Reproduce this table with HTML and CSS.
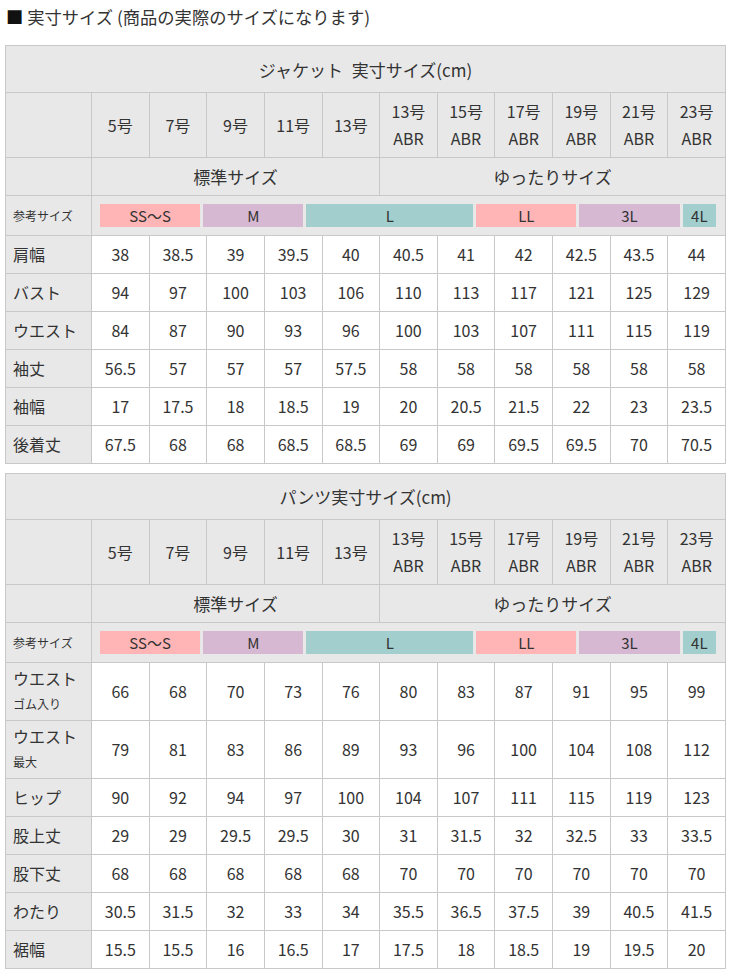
FILE: index.html
```html
<!DOCTYPE html>
<html lang="ja">
<head>
<meta charset="utf-8">
<title>実寸サイズ</title>
<link rel="stylesheet" href="styles.css">
</head>
<body>
<div class="page">
  <h1 class="title"><span class="sq">■</span> 実寸サイズ (商品の実際のサイズになります)</h1>

  <table class="size-table">
    <colgroup><col class="c-label"><col span="11"></colgroup>
    <tr class="r-title"><th colspan="12">ジャケット 実寸サイズ(cm)</th></tr>
    <tr class="r-num">
      <th class="lab"></th>
      <th>5号</th><th>7号</th><th>9号</th><th>11号</th><th>13号</th>
      <th>13号<br>ABR</th><th>15号<br>ABR</th><th>17号<br>ABR</th><th>19号<br>ABR</th><th>21号<br>ABR</th><th>23号<br>ABR</th>
    </tr>
    <tr class="r-group">
      <th class="lab"></th>
      <th colspan="5">標準サイズ</th>
      <th colspan="6">ゆったりサイズ</th>
    </tr>
    <tr class="r-ref">
      <th class="lab small">参考サイズ</th>
      <td colspan="11" class="ref-cell">
        <div class="bars">
          <span class="bar pink">SS～S</span>
          <span class="bar purple">M</span>
          <span class="bar teal">L</span>
          <span class="bar pink">LL</span>
          <span class="bar purple">3L</span>
          <span class="bar teal">4L</span>
        </div>
      </td>
    </tr>
    <tr><th class="lab">肩幅</th><td>38</td><td>38.5</td><td>39</td><td>39.5</td><td>40</td><td>40.5</td><td>41</td><td>42</td><td>42.5</td><td>43.5</td><td>44</td></tr>
    <tr><th class="lab">バスト</th><td>94</td><td>97</td><td>100</td><td>103</td><td>106</td><td>110</td><td>113</td><td>117</td><td>121</td><td>125</td><td>129</td></tr>
    <tr><th class="lab">ウエスト</th><td>84</td><td>87</td><td>90</td><td>93</td><td>96</td><td>100</td><td>103</td><td>107</td><td>111</td><td>115</td><td>119</td></tr>
    <tr><th class="lab">袖丈</th><td>56.5</td><td>57</td><td>57</td><td>57</td><td>57.5</td><td>58</td><td>58</td><td>58</td><td>58</td><td>58</td><td>58</td></tr>
    <tr><th class="lab">袖幅</th><td>17</td><td>17.5</td><td>18</td><td>18.5</td><td>19</td><td>20</td><td>20.5</td><td>21.5</td><td>22</td><td>23</td><td>23.5</td></tr>
    <tr><th class="lab">後着丈</th><td>67.5</td><td>68</td><td>68</td><td>68.5</td><td>68.5</td><td>69</td><td>69</td><td>69.5</td><td>69.5</td><td>70</td><td>70.5</td></tr>
  </table>

  <table class="size-table second">
    <colgroup><col class="c-label"><col span="11"></colgroup>
    <tr class="r-title r-title2"><th colspan="12">パンツ実寸サイズ(cm)</th></tr>
    <tr class="r-num">
      <th class="lab"></th>
      <th>5号</th><th>7号</th><th>9号</th><th>11号</th><th>13号</th>
      <th>13号<br>ABR</th><th>15号<br>ABR</th><th>17号<br>ABR</th><th>19号<br>ABR</th><th>21号<br>ABR</th><th>23号<br>ABR</th>
    </tr>
    <tr class="r-group">
      <th class="lab"></th>
      <th colspan="5">標準サイズ</th>
      <th colspan="6">ゆったりサイズ</th>
    </tr>
    <tr class="r-ref">
      <th class="lab small">参考サイズ</th>
      <td colspan="11" class="ref-cell">
        <div class="bars">
          <span class="bar pink">SS～S</span>
          <span class="bar purple">M</span>
          <span class="bar teal">L</span>
          <span class="bar pink">LL</span>
          <span class="bar purple">3L</span>
          <span class="bar teal">4L</span>
        </div>
      </td>
    </tr>
    <tr class="r-tall"><th class="lab">ウエスト<br><span class="note">ゴム入り</span></th><td>66</td><td>68</td><td>70</td><td>73</td><td>76</td><td>80</td><td>83</td><td>87</td><td>91</td><td>95</td><td>99</td></tr>
    <tr class="r-tall"><th class="lab">ウエスト<br><span class="note">最大</span></th><td>79</td><td>81</td><td>83</td><td>86</td><td>89</td><td>93</td><td>96</td><td>100</td><td>104</td><td>108</td><td>112</td></tr>
    <tr><th class="lab">ヒップ</th><td>90</td><td>92</td><td>94</td><td>97</td><td>100</td><td>104</td><td>107</td><td>111</td><td>115</td><td>119</td><td>123</td></tr>
    <tr><th class="lab">股上丈</th><td>29</td><td>29</td><td>29.5</td><td>29.5</td><td>30</td><td>31</td><td>31.5</td><td>32</td><td>32.5</td><td>33</td><td>33.5</td></tr>
    <tr><th class="lab">股下丈</th><td>68</td><td>68</td><td>68</td><td>68</td><td>68</td><td>70</td><td>70</td><td>70</td><td>70</td><td>70</td><td>70</td></tr>
    <tr><th class="lab">わたり</th><td>30.5</td><td>31.5</td><td>32</td><td>33</td><td>34</td><td>35.5</td><td>36.5</td><td>37.5</td><td>39</td><td>40.5</td><td>41.5</td></tr>
    <tr><th class="lab">裾幅</th><td>15.5</td><td>15.5</td><td>16</td><td>16.5</td><td>17</td><td>17.5</td><td>18</td><td>18.5</td><td>19</td><td>19.5</td><td>20</td></tr>
  </table>
</div>
</body>
</html>
```

FILE: styles.css
```css
html, body {
  margin: 0;
  padding: 0;
  background: #ffffff;
}

body {
  font-family: "Noto Sans CJK JP", "Noto Sans", sans-serif;
  color: #333333;
}

.page {
  padding: 0 5px;
}

.title {
  margin: 0;
  padding: 5px 0 0 1px;
  height: 45px;
  box-sizing: border-box;
  font-size: 17.3px;
  font-weight: normal;
  line-height: 24px;
  color: #333333;
}

.title .sq {
  color: #111111;
}

.size-table {
  width: 721px;
  table-layout: fixed;
  border-collapse: collapse;
  margin: 0;
}

.size-table.second {
  margin-top: 9px;
}

.c-label {
  width: 86px;
}

.size-table th,
.size-table td {
  border: 1px solid #c8c8c8;
  padding: 0;
  text-align: center;
  vertical-align: middle;
  font-size: 16px;
  font-weight: normal;
  line-height: 27px;
  color: #333333;
  height: 37px;
}

.size-table th {
  background: #e8e8e8;
}

.size-table td {
  background: #ffffff;
}

.r-title th {
  height: 46px;
  font-size: 17px;
  word-spacing: 5px;
}

.r-title2 th {
  height: 45px;
}

.r-group th {
  font-size: 17px;
}

.r-num th {
  height: 64px;
}

.r-tall th,
.r-tall td {
  height: 57px;
}

.size-table th.lab {
  text-align: left;
  padding-left: 7px;
  background: #e8e8e8;
}

.size-table th.small {
  font-size: 12px;
  line-height: 16px;
}

.note {
  font-size: 12px;
  line-height: 24px;
  display: inline-block;
  vertical-align: top;
}

.r-tall th.lab {
  line-height: 28px;
}

.size-table td.ref-cell {
  background: #e8e8e8;
  height: 39px;
  padding: 0 9px 0 8px;
}

.bars {
  display: grid;
  grid-template-columns: 3fr 3fr 5fr 3fr 3fr 1fr;
  column-gap: 3px;
}

.bar {
  display: block;
  height: 23px;
  line-height: 23px;
  font-size: 15px;
  color: #333333;
  text-align: center;
}

.pink {
  background: #ffb5b5;
}

.purple {
  background: #d7b8d2;
}

.teal {
  background: #a2cfcd;
}
```
